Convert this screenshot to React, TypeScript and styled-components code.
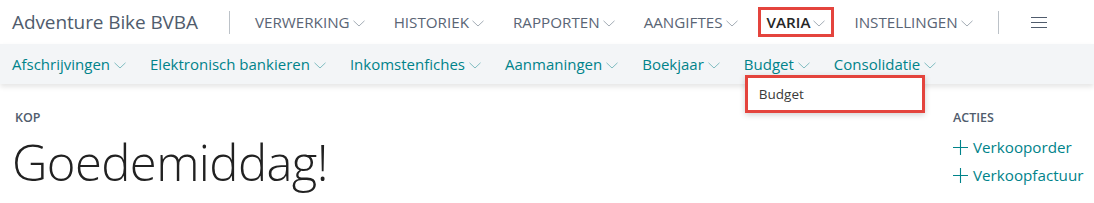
import React from "react";
import styled, { createGlobalStyle, css } from "styled-components";

const Global = createGlobalStyle`
  html, body { margin: 0; padding: 0; background: #ffffff; }
  body { font-family: "Open Sans", "Noto Sans", "Liberation Sans", sans-serif; }
  * { box-sizing: border-box; }
`;

const TEAL = "#00838a";
const RED = "#e4443d";

const Page = styled.div`
  width: 1094px;
  height: 203px;
  overflow: hidden;
  position: relative;
`;

const TopBar = styled.header`
  height: 44px;
  display: flex;
  align-items: center;
  padding-left: 12px;
  background: #ffffff;
`;

const Title = styled.div`
  font-size: 19px;
  color: #505c6d;
  letter-spacing: -0.1px;
  white-space: nowrap;
`;

const VSep = styled.div<{ $ml: number; $mr: number }>`
  width: 1px;
  height: 23px;
  background: #bcc2c8;
  margin-left: ${(p) => p.$ml}px;
  margin-right: ${(p) => p.$mr}px;
`;

const Nav = styled.nav`
  display: flex;
  align-items: center;
  gap: 11px;
`;

const NavItem = styled.div<{ $active?: boolean; $marked?: boolean }>`
  height: 30px;
  padding: 0 9px;
  display: flex;
  align-items: center;
  gap: 3px;
  font-size: 15.2px;
  text-transform: uppercase;
  white-space: nowrap;
  color: ${(p) => (p.$active ? "#262626" : "#5a6575")};
  font-weight: ${(p) => (p.$active ? 600 : 400)};
  ${(p) =>
    p.$marked &&
    css`
      outline: 3px solid ${RED};
      outline-offset: -3px;
    `}
`;

const Hamburger = styled.div`
  width: 16px;
  display: flex;
  flex-direction: column;
  gap: 4px;
  span {
    display: block;
    height: 1px;
    background: #505c6d;
  }
`;

const SubBar = styled.div`
  height: 40px;
  display: flex;
  align-items: center;
  gap: 24px;
  padding-left: 12px;
  background: #f3f5f7;
  box-shadow: 0 3px 5px rgba(0, 0, 0, 0.1);
  position: relative;
  z-index: 1;
`;

const SubItem = styled.div`
  position: relative;
  height: 40px;
  display: flex;
  align-items: center;
  gap: 4px;
  font-size: 15px;
  color: ${TEAL};
  white-space: nowrap;
`;

const Dropdown = styled.div`
  position: absolute;
  left: 1px;
  top: 31px;
  width: 180px;
  height: 38px;
  background: #ffffff;
  box-shadow: 0 2px 6px rgba(0, 0, 0, 0.18);
  outline: 3px solid ${RED};
  outline-offset: -3px;
  display: flex;
  align-items: center;
  padding-left: 14px;
  font-size: 13.5px;
  color: #3a3a3a;
  z-index: 5;
`;

const Content = styled.main`
  display: grid;
  grid-template-columns: 1fr 141px;
`;

const Greeting = styled.section`
  padding: 25px 0 0 15px;
`;

const Caption = styled.div`
  font-size: 12.5px;
  font-weight: 600;
  text-transform: uppercase;
  color: #505c6d;
  line-height: 17px;
`;

const Heading = styled.h1`
  margin: 8px 0 0 -3px;
  font-size: 49px;
  font-weight: 300;
  color: #212121;
  line-height: 56px;
  letter-spacing: -0.6px;
`;

const Actions = styled.section`
  padding-top: 25px;
  display: flex;
  flex-direction: column;
`;

const ActionList = styled.div`
  margin-top: 10px;
  display: flex;
  flex-direction: column;
  gap: 6px;
`;

const ActionLink = styled.div`
  display: flex;
  align-items: center;
  gap: 5px;
  height: 22px;
  font-size: 15.2px;
  color: ${TEAL};
  white-space: nowrap;
`;

const Chevron = ({ color = "#a3acb5" }: { color?: string }) => (
  <svg width="12" height="7" viewBox="0 0 12 7" style={{ flexShrink: 0, marginTop: 2 }}>
    <path d="M0.5 0.8 L6 6 L11.5 0.8" fill="none" stroke={color} strokeWidth="1" />
  </svg>
);

const Plus = () => (
  <svg width="15" height="15" viewBox="0 0 15 15" style={{ flexShrink: 0 }}>
    <path d="M7.5 0 V15 M0 7.5 H15" fill="none" stroke={TEAL} strokeWidth="1.1" />
  </svg>
);

const topNav = ["Verwerking", "Historiek", "Rapporten", "Aangiftes", "Varia", "Instellingen"];
const subNav = [
  "Afschrijvingen",
  "Elektronisch bankieren",
  "Inkomstenfiches",
  "Aanmaningen",
  "Boekjaar",
  "Budget",
  "Consolidatie",
];

export default function App() {
  return (
    <Page>
      <Global />
      <TopBar>
        <Title>Adventure Bike BVBA</Title>
        <VSep $ml={31} $mr={16} />
        <Nav>
          {topNav.map((n) => (
            <NavItem key={n} $active={n === "Varia"} $marked={n === "Varia"}>
              {n}
              <Chevron />
            </NavItem>
          ))}
        </Nav>
        <VSep $ml={16} $mr={32} />
        <Hamburger>
          <span />
          <span />
          <span />
        </Hamburger>
      </TopBar>
      <SubBar>
        {subNav.map((n) => (
          <SubItem key={n}>
            {n}
            <Chevron color="#7fbcc0" />
            {n === "Budget" && <Dropdown>Budget</Dropdown>}
          </SubItem>
        ))}
      </SubBar>
      <Content>
        <Greeting>
          <Caption>Kop</Caption>
          <Heading>Goedemiddag!</Heading>
        </Greeting>
        <Actions>
          <Caption>Acties</Caption>
          <ActionList>
            <ActionLink>
              <Plus />
              Verkooporder
            </ActionLink>
            <ActionLink>
              <Plus />
              Verkoopfactuur
            </ActionLink>
          </ActionList>
        </Actions>
      </Content>
    </Page>
  );
}
